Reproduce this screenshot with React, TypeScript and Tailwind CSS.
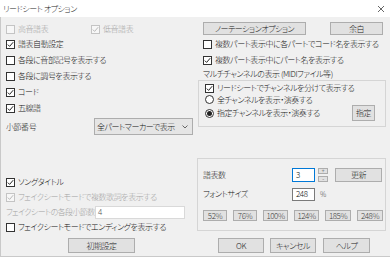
import React from 'react';

const FONT = "font-['Noto_Sans_CJK_JP','Noto_Sans',sans-serif] [font-feature-settings:'palt']";

const Check = ({ checked = false, disabled = false, label }: { checked?: boolean; disabled?: boolean; label: string }) => (
  <div className="flex items-center">
    <span
      className={
        'w-[9px] h-[9px] border flex items-center justify-center mr-[3px] shrink-0 ' +
        (disabled ? 'border-[#c4c4c4] bg-[#f7f7f7]' : 'border-[#333333] bg-white')
      }
    >
      {checked && (
        <svg width="7" height="7" viewBox="0 0 7 7">
          <polyline points="0.8,3.6 2.6,5.4 6.2,1.2" fill="none" stroke={disabled ? '#b8b8b8' : '#222'} strokeWidth="1" />
        </svg>
      )}
    </span>
    <span className={disabled ? 'text-[#a3a3a3]' : ''}>{label}</span>
  </div>
);

const Radio = ({ checked = false, label }: { checked?: boolean; label: string }) => (
  <div className="flex items-center">
    <span className="w-[9px] h-[9px] rounded-full border border-[#333333] bg-white flex items-center justify-center mr-[3px] shrink-0">
      {checked && <span className="w-[5px] h-[5px] rounded-full bg-[#222]" />}
    </span>
    <span>{label}</span>
  </div>
);

const Btn = ({ label, className = '' }: { label: string; className?: string }) => (
  <div
    className={
      'flex items-center justify-center bg-[#e1e1e1] border border-[#adadad] text-[#222] shrink-0 ' + className
    }
  >
    {label}
  </div>
);

export default function App() {
  const pcts = [
    { v: '52%', w: 'w-[24px]' },
    { v: '76%', w: 'w-[24px]' },
    { v: '100%', w: 'w-[25px]' },
    { v: '124%', w: 'w-[25px]' },
    { v: '185%', w: 'w-[26px]' },
    { v: '248%', w: 'w-[26px]' },
  ];

  return (
    <div className={`w-[390px] h-[257px] bg-[#f0f0f0] text-[8px] font-light tracking-[-0.45px] leading-none text-[#141414] whitespace-nowrap flex flex-col overflow-hidden ${FONT}`}>
      {/* タイトルバー */}
      <div className="h-[17px] bg-white flex items-center justify-between pl-[3px] pr-[5px] shrink-0">
        <span className="text-[#2a2a2a]">リードシート オプション</span>
        <svg width="8" height="8" viewBox="0 0 8 8">
          <path d="M1 1L7 7M7 1L1 7" stroke="#555" strokeWidth="0.9" />
        </svg>
      </div>

      <div className="flex-1 flex border-l border-b border-[#c9c9c9]">
        {/* 左側 */}
        <div className="w-[194px] pl-[5px] pt-[5px] flex flex-col shrink-0">
          <div className="h-[14px] flex items-center">
            <div className="w-[85px]">
              <Check disabled label="高音譜表" />
            </div>
            <Check disabled checked label="低音譜表" />
          </div>
          <div className="h-4 flex items-center">
            <Check checked label="譜表自動設定" />
          </div>
          <div className="h-4 flex items-center">
            <Check label="各段に音部記号を表示する" />
          </div>
          <div className="h-4 flex items-center">
            <Check label="各段に調号を表示する" />
          </div>
          <div className="h-4 flex items-center">
            <Check checked label="コード" />
          </div>
          <div className="h-4 flex items-center">
            <Check checked label="五線譜" />
          </div>
          <div className="mt-[2px] h-[17px] flex items-center">
            <span className="w-[88px]">小節番号</span>
            <div className="w-[99px] h-[17px] bg-[#e5e5e5] border border-[#adadad] flex items-center justify-between pl-[2px] pr-[4px]">
              <span>全パートマーカーで表示</span>
              <svg width="6" height="4" viewBox="0 0 6 4">
                <polyline points="0.5,0.5 3,3 5.5,0.5" fill="none" stroke="#555" strokeWidth="0.9" />
              </svg>
            </div>
          </div>

          <div className="mt-[39px] h-4 flex items-center">
            <Check checked label="ソングタイトル" />
          </div>
          <div className="h-[14px] flex items-center">
            <Check disabled checked label="フェイクシートモードで複数歌詞を表示する" />
          </div>
          <div className="h-4 flex items-center">
            <span className="w-[89px] text-[#a3a3a3] tracking-[-0.6px]">フェイクシートの各段小節数</span>
            <div className="w-[90px] h-[13px] bg-white border border-[#d9d9d9] flex items-center pl-[2px] text-[#555]">4</div>
          </div>
          <div className="h-[14px] flex items-center">
            <Check label="フェイクシートモードでエンディングを表示する" />
          </div>
          <Btn label="初期設定" className="mt-[4px] ml-[62px] w-[67px] h-[15px]" />
        </div>

        {/* 右側 */}
        <div className="flex-1 pl-[8px] pt-[5px] flex flex-col">
          <div className="h-[13px] flex">
            <Btn label="ノーテーションオプション" className="w-[103px] h-[13px]" />
            <Btn label="余白" className="ml-[24px] w-[53px] h-[13px]" />
          </div>
          <div className="mt-[1px] h-4 flex items-center">
            <Check label="複数パート表示中に各パートでコード名を表示する" />
          </div>
          <div className="h-4 flex items-center">
            <Check checked label="複数パート表示中にパート名を表示する" />
          </div>
          <div className="h-[12px] flex items-center">マルチチャンネルの表示 (MIDIファイル等)</div>

          {/* マルチチャンネル */}
          <div className="-ml-[5px] w-[188px] h-[47px] border border-[#d5d5d5] pl-[6px] pt-[1px] flex flex-col">
            <div className="h-[12px] flex items-center">
              <Check checked label="リードシートでチャンネルを分けて表示する" />
            </div>
            <div className="h-[11px] flex items-center">
              <Radio label="全チャンネルを表示・演奏する" />
            </div>
            <div className="h-4 flex items-center justify-between pr-[10px]">
              <Radio checked label="指定チャンネルを表示・演奏する" />
              <Btn label="指定" className="w-[23px] h-4" />
            </div>
          </div>

          {/* 譜表数・フォントサイズ */}
          <div className="mt-[31px] -ml-[6px] w-[189px] h-[73px] border border-[#d5d5d5] pl-[5px] pt-[8px] flex flex-col">
            <div className="h-4 flex items-center">
              <span className="w-[89px]">譜表数</span>
              <div className="w-[23px] h-[14px] bg-white border border-[#0078d7] flex items-center pl-[3px]">3</div>
              <div className="ml-[3px] w-[10px] h-4 flex flex-col justify-between py-[1px]">
                <div className="h-[6px] bg-[#e1e1e1] border border-[#adadad] flex items-center justify-center text-[6px] text-[#444]">+</div>
                <div className="h-[6px] bg-[#e1e1e1] border border-[#adadad] flex items-center justify-center text-[6px] text-[#444]">-</div>
              </div>
              <Btn label="更新" className="ml-[7px] w-[47px] h-[14px]" />
            </div>
            <div className="mt-[5px] h-[12px] flex items-center">
              <span className="w-[89px]">フォントサイズ</span>
              <div className="w-[23px] h-[13px] bg-white border border-[#7a7a7a] flex items-center pl-[3px]">248</div>
              <span className="ml-[5px] text-[7px] text-[#444]">%</span>
            </div>
            <div className="mt-[10px] h-[11px] flex gap-[6px]">
              {pcts.map((p) => (
                <Btn key={p.v} label={p.v} className={`${p.w} h-[11px] text-[#444]`} />
              ))}
            </div>
          </div>

          <div className="mt-[7px] h-[15px] flex">
            <Btn label="OK" className="ml-[15px] w-[46px] h-[15px] border-[#0078d7]" />
            <Btn label="キャンセル" className="ml-[6px] w-[46px] h-[15px]" />
            <Btn label="ヘルプ" className="ml-[7px] w-[47px] h-[15px]" />
          </div>
        </div>
      </div>
    </div>
  );
}
